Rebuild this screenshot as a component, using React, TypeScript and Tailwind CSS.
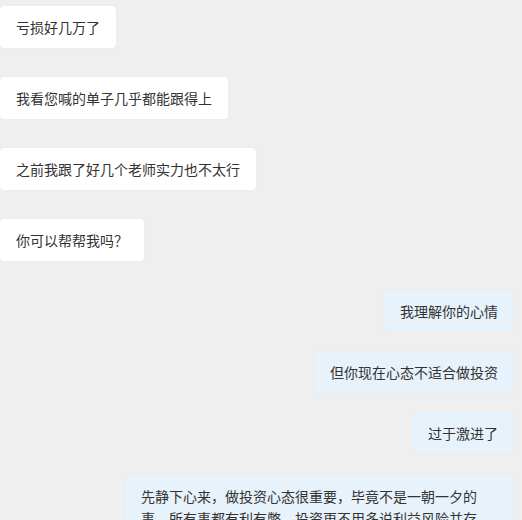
import React from 'react';

type Msg = { text: string; mine?: boolean };

const messages: Msg[] = [
  { text: '亏损好几万了' },
  { text: '我看您喊的单子几乎都能跟得上' },
  { text: '之前我跟了好几个老师实力也不太行' },
  { text: '你可以帮帮我吗？' },
  { text: '我理解你的心情', mine: true },
  { text: '但你现在心态不适合做投资', mine: true },
  { text: '过于激进了', mine: true },
];

function Bubble({ text, mine }: Msg) {
  return (
    <div className={mine ? 'flex justify-end pr-2' : 'flex justify-start'}>
      <div
        className={
          mine
            ? 'rounded bg-[#e7f2fb] px-4 py-[11px] text-[14px] leading-5 text-[#333333] shadow-[0_0_2px_rgba(0,0,0,0.06)]'
            : 'rounded bg-white px-4 py-[11px] text-[14px] leading-5 text-[#333333] shadow-[0_0_2px_rgba(0,0,0,0.06)]'
        }
      >
        {text}
      </div>
    </div>
  );
}

export default function App() {
  const left = messages.filter((m) => !m.mine);
  const right = messages.filter((m) => m.mine);

  return (
    <div
      className="h-[520px] w-[522px] overflow-hidden bg-[#efefef] pt-[6px]"
      style={{ fontFamily: '"Noto Sans CJK SC", "Noto Sans", sans-serif' }}
    >
      <div className="flex flex-col gap-[29px]">
        {left.map((m, i) => (
          <Bubble key={i} {...m} />
        ))}
        <div className="flex flex-col gap-[19px]">
          {right.map((m, i) => (
            <Bubble key={i} {...m} />
          ))}
          <div className="flex justify-end pr-2">
            <div className="w-[389px] rounded bg-[#e7f2fb] py-3 pl-4 pr-[36px] text-[14px] leading-[22px] text-[#333333] shadow-[0_0_2px_rgba(0,0,0,0.06)]">
              先静下心来，做投资心态很重要，毕竟不是一朝一夕的事，所有事都有利有弊，投资更不用多说利益风险并存
            </div>
          </div>
        </div>
      </div>
    </div>
  );
}
